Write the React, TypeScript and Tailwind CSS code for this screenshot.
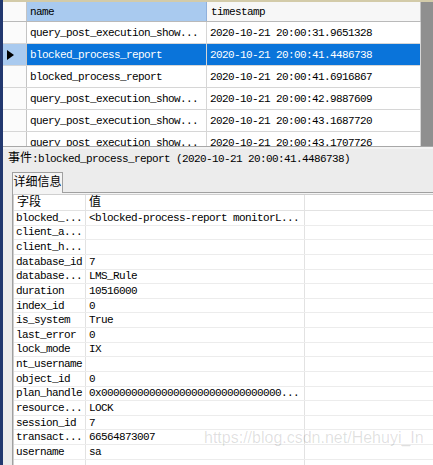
import React from 'react';

type Row = { name: string; ts: string; selected?: boolean };

const EVENTS: Row[] = [
  { name: 'query_post_execution_show...', ts: '2020-10-21 20:00:31.9651328' },
  { name: 'blocked_process_report', ts: '2020-10-21 20:00:41.4486738', selected: true },
  { name: 'blocked_process_report', ts: '2020-10-21 20:00:41.6916867' },
  { name: 'query_post_execution_show...', ts: '2020-10-21 20:00:42.9887609' },
  { name: 'query_post_execution_show...', ts: '2020-10-21 20:00:43.1687720' },
  { name: 'query_post_execution_show...', ts: '2020-10-21 20:00:43.1707726' },
];

const FIELDS: [string, string][] = [
  ['blocked_...', '<blocked-process-report monitorL...'],
  ['client_a...', ''],
  ['client_h...', ''],
  ['database_id', '7'],
  ['database...', 'LMS_Rule'],
  ['duration', '10516000'],
  ['index_id', '0'],
  ['is_system', 'True'],
  ['last_error', '0'],
  ['lock_mode', 'IX'],
  ['nt_username', ''],
  ['object_id', '0'],
  ['plan_handle', '0x000000000000000000000000000000...'],
  ['resource...', 'LOCK'],
  ['session_id', '7'],
  ['transact...', '66564873007'],
  ['username', 'sa'],
  ['', ''],
];

export default function App() {
  return (
    <div className="w-[433px] h-[465px] overflow-hidden relative flex bg-[#ececec] text-black text-[11px] leading-[14px] tracking-[-0.6px] font-['Liberation_Mono','Noto_Sans_CJK_SC',monospace]">
      {/* left window edge */}
      <div className="w-[3px] shrink-0 bg-[#22386f]" />

      <div className="flex-1 min-w-0 flex flex-col">
        {/* Event grid */}
        <div className="h-[146px] shrink-0 flex flex-col border-t-2 border-[#d3cba9] overflow-hidden">
          <div className="flex flex-1 min-h-0">
            <div className="w-[418px] bg-white overflow-hidden">
              <div className="flex h-[20px] border-b border-[#b9b9b9]">
                <div className="w-[24px] shrink-0 bg-[#fafafa] border-r border-[#c4c4c4]" />
                <div className="w-[180px] shrink-0 flex items-center pl-[3px] bg-[#a9caef] border-r border-[#8fb0dc]">
                  name
                </div>
                <div className="flex-1 flex items-center pl-[4px] bg-[#f7f7f7] border-r border-[#c4c4c4]">
                  timestamp
                </div>
              </div>
              {EVENTS.map((r, i) => (
                <div key={i} className="flex h-[22px] border-b border-[#d6d6d6]">
                  <div
                    className={`w-[24px] shrink-0 flex items-center pl-[4px] border-r border-[#c4c4c4] ${
                      r.selected ? 'bg-[#a9caef]' : 'bg-[#fbfbfb]'
                    }`}
                  >
                    {r.selected && (
                      <svg width="7" height="10" viewBox="0 0 7 10">
                        <path d="M0 0 L7 5 L0 10 Z" fill="#000" />
                      </svg>
                    )}
                  </div>
                  <div
                    className={`w-[180px] shrink-0 flex items-center pl-[3px] border-r border-[#d6d6d6] whitespace-nowrap ${
                      r.selected ? 'bg-[#0a74da] text-white' : ''
                    }`}
                  >
                    {r.name}
                  </div>
                  <div
                    className={`flex-1 flex items-center pl-[3px] border-r border-[#d6d6d6] whitespace-nowrap ${
                      r.selected ? 'bg-[#0a74da] text-white' : ''
                    }`}
                  >
                    {r.ts}
                  </div>
                </div>
              ))}
            </div>
            <div className="w-[12px] shrink-0 bg-[#8f8f8f]" />
          </div>
        </div>

        {/* splitter */}
        <div className="h-[3px] shrink-0 border-t border-[#a8a8a8] bg-[#f4f4f4]" />

        {/* Event details */}
        <div className="h-[20px] shrink-0 flex items-center pl-[5px] whitespace-nowrap">
          <span className="text-[12px] tracking-normal">事件</span>:blocked_process_report (2020-10-21 20:00:41.4486738)
        </div>

        <div className="mt-[3px] ml-[9px] flex flex-col flex-1 min-h-0">
          <div className="relative z-10 -mb-px w-[51px] h-[21px] flex items-center justify-center border border-b-0 border-[#a0a0a0] bg-[#f4f4f4] text-[12px] tracking-normal">
            详细信息
          </div>
          <div className="flex-1 min-h-0 border-t border-l border-[#a0a0a0] pt-[1px] bg-[#f4f4f4]">
            <div className="h-full bg-white border-t border-l border-[#cfcfcf] overflow-hidden">
              <div className="flex h-[16px] border-b border-[#e2e2e2]">
                <div className="w-[72px] shrink-0 flex items-center pl-[3px] border-r border-[#e2e2e2] text-[12px] tracking-normal">
                  字段
                </div>
                <div className="w-[219px] shrink-0 flex items-center pl-[3px] border-r border-[#e2e2e2] text-[12px] tracking-normal">
                  值
                </div>
                <div className="flex-1" />
              </div>
              {FIELDS.map(([k, v], i) => (
                <div key={i} className="flex h-[14.63px] border-b border-[#ececec]">
                  <div className="w-[72px] shrink-0 flex items-center pl-[2px] border-r border-[#e2e2e2] whitespace-nowrap">
                    {k}
                  </div>
                  <div className="w-[219px] shrink-0 flex items-center pl-[3px] border-r border-[#e2e2e2] whitespace-nowrap">
                    {v}
                  </div>
                  <div className="flex-1" />
                </div>
              ))}
            </div>
          </div>
        </div>
      </div>

      {/* watermark */}
      <div className="absolute left-[204px] top-[431px] text-[16px] tracking-normal text-[rgba(0,0,0,0.13)] font-['Liberation_Sans',sans-serif] whitespace-nowrap pointer-events-none">
        https://blog.csdn.net/Hehuyi_In
      </div>
    </div>
  );
}
